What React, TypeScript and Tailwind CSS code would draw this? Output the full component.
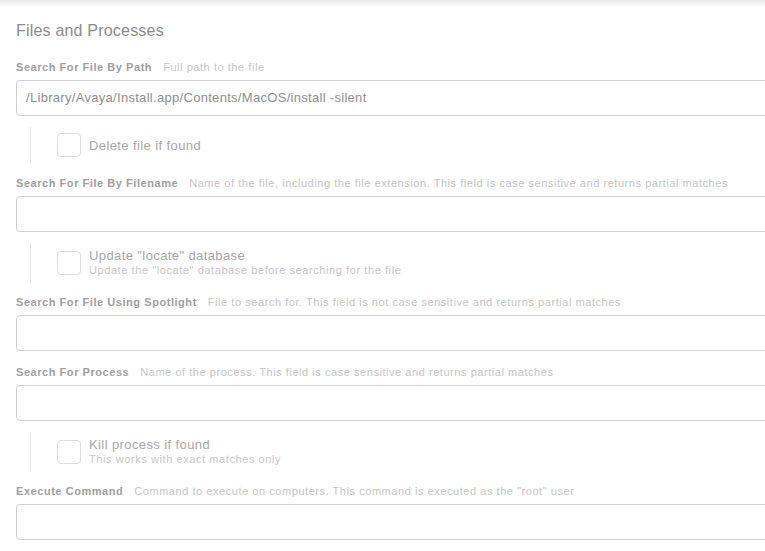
import React from "react";

type Field = {
  label: string;
  help: string;
  value?: string;
  option?: { title: string; sub?: string };
  mt: string;
};

const fields: Field[] = [
  {
    label: "Search For File By Path",
    help: "Full path to the file",
    value: "/Library/Avaya/Install.app/Contents/MacOS/install -silent",
    option: { title: "Delete file if found" },
    mt: "mt-[18px]",
  },
  {
    label: "Search For File By Filename",
    help: "Name of the file, including the file extension. This field is case sensitive and returns partial matches",
    option: {
      title: 'Update "locate" database',
      sub: 'Update the "locate" database before searching for the file',
    },
    mt: "mt-[12px]",
  },
  {
    label: "Search For File Using Spotlight",
    help: "File to search for. This field is not case sensitive and returns partial matches",
    mt: "mt-[11px]",
  },
  {
    label: "Search For Process",
    help: "Name of the process. This field is case sensitive and returns partial matches",
    option: { title: "Kill process if found", sub: "This works with exact matches only" },
    mt: "mt-[13px]",
  },
  {
    label: "Execute Command",
    help: 'Command to execute on computers. This command is executed as the "root" user',
    mt: "mt-[11px]",
  },
];

function OptionRow({ title, sub }: { title: string; sub?: string }) {
  return (
    <div className="mt-[11px] ml-[14px] border-l border-[#e6e6e6] py-[6px] pl-[26px] flex items-center gap-2">
      <div className="w-[24px] h-[24px] shrink-0 rounded-[4px] border border-[#dcdcdc] bg-white" />
      <div className="flex flex-col">
        <span
          className={
            sub
              ? "-mt-[1px] text-[13px] leading-[15px] tracking-[0.4px] text-[#a8a8a8]"
              : "text-[13px] leading-[15px] tracking-[0.4px] text-[#a8a8a8]"
          }
        >
          {title}
        </span>
        {sub && (
          <span className="mt-[1px] text-[11px] leading-[13px] tracking-[0.58px] text-[#c8c8c8]">{sub}</span>
        )}
      </div>
    </div>
  );
}

export default function App() {
  return (
    <div
      className="w-full min-h-[551px] bg-white overflow-hidden"
      style={{ fontFamily: '"Liberation Sans", Arial, sans-serif' }}
    >
      <div className="h-[7px] bg-gradient-to-b from-[#e9e9e9] to-white" />
      <div className="pl-4">
        <h1 className="mt-[14px] text-[16px] leading-[20px] font-normal tracking-[0.2px] text-[#8c8c8c]">
          Files and Processes
        </h1>
        {fields.map((f) => (
          <div key={f.label}>
            <div className={`${f.mt} flex items-baseline gap-[11px] leading-[16px]`}>
              <span className="text-[11px] font-bold tracking-[0.55px] text-[#a0a0a0]">{f.label}</span>
              <span className="text-[11px] tracking-[0.55px] text-[#c6c6c6]">{f.help}</span>
            </div>
            <div className="mt-[5px] w-[770px] h-[36px] rounded-[4px] border border-[#d2d2d2] bg-white flex items-center px-[9px]">
              <span className="text-[13px] tracking-[0.3px] text-[#909090]">{f.value ?? ""}</span>
            </div>
            {f.option && <OptionRow title={f.option.title} sub={f.option.sub} />}
          </div>
        ))}
      </div>
    </div>
  );
}
